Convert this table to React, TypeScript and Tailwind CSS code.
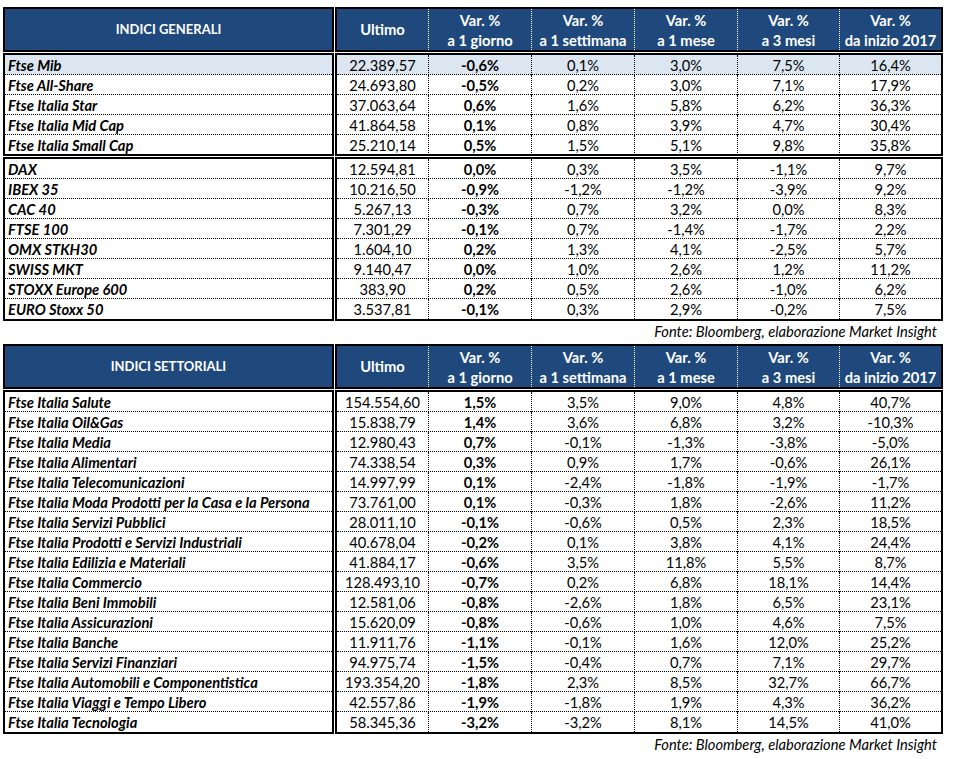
import React from "react";

type Row = [string, string, string, string, string, string, string];

const generali1: Row[] = [
  ["Ftse Mib", "22.389,57", "-0,6%", "0,1%", "3,0%", "7,5%", "16,4%"],
  ["Ftse All-Share", "24.693,80", "-0,5%", "0,2%", "3,0%", "7,1%", "17,9%"],
  ["Ftse Italia Star", "37.063,64", "0,6%", "1,6%", "5,8%", "6,2%", "36,3%"],
  ["Ftse Italia Mid Cap", "41.864,58", "0,1%", "0,8%", "3,9%", "4,7%", "30,4%"],
  ["Ftse Italia Small Cap", "25.210,14", "0,5%", "1,5%", "5,1%", "9,8%", "35,8%"],
];

const generali2: Row[] = [
  ["DAX", "12.594,81", "0,0%", "0,3%", "3,5%", "-1,1%", "9,7%"],
  ["IBEX 35", "10.216,50", "-0,9%", "-1,2%", "-1,2%", "-3,9%", "9,2%"],
  ["CAC 40", "5.267,13", "-0,3%", "0,7%", "3,2%", "0,0%", "8,3%"],
  ["FTSE 100", "7.301,29", "-0,1%", "0,7%", "-1,4%", "-1,7%", "2,2%"],
  ["OMX STKH30", "1.604,10", "0,2%", "1,3%", "4,1%", "-2,5%", "5,7%"],
  ["SWISS MKT", "9.140,47", "0,0%", "1,0%", "2,6%", "1,2%", "11,2%"],
  ["STOXX Europe 600", "383,90", "0,2%", "0,5%", "2,6%", "-1,0%", "6,2%"],
  ["EURO Stoxx 50", "3.537,81", "-0,1%", "0,3%", "2,9%", "-0,2%", "7,5%"],
];

const settoriali: Row[] = [
  ["Ftse Italia Salute", "154.554,60", "1,5%", "3,5%", "9,0%", "4,8%", "40,7%"],
  ["Ftse Italia Oil&Gas", "15.838,79", "1,4%", "3,6%", "6,8%", "3,2%", "-10,3%"],
  ["Ftse Italia Media", "12.980,43", "0,7%", "-0,1%", "-1,3%", "-3,8%", "-5,0%"],
  ["Ftse Italia Alimentari", "74.338,54", "0,3%", "0,9%", "1,7%", "-0,6%", "26,1%"],
  ["Ftse Italia Telecomunicazioni", "14.997,99", "0,1%", "-2,4%", "-1,8%", "-1,9%", "-1,7%"],
  ["Ftse Italia Moda Prodotti per la Casa e la Persona", "73.761,00", "0,1%", "-0,3%", "1,8%", "-2,6%", "11,2%"],
  ["Ftse Italia Servizi Pubblici", "28.011,10", "-0,1%", "-0,6%", "0,5%", "2,3%", "18,5%"],
  ["Ftse Italia Prodotti e Servizi Industriali", "40.678,04", "-0,2%", "0,1%", "3,8%", "4,1%", "24,4%"],
  ["Ftse Italia Edilizia e Materiali", "41.884,17", "-0,6%", "3,5%", "11,8%", "5,5%", "8,7%"],
  ["Ftse Italia Commercio", "128.493,10", "-0,7%", "0,2%", "6,8%", "18,1%", "14,4%"],
  ["Ftse Italia Beni Immobili", "12.581,06", "-0,8%", "-2,6%", "1,8%", "6,5%", "23,1%"],
  ["Ftse Italia Assicurazioni", "15.620,09", "-0,8%", "-0,6%", "1,0%", "4,6%", "7,5%"],
  ["Ftse Italia Banche", "11.911,76", "-1,1%", "-0,1%", "1,6%", "12,0%", "25,2%"],
  ["Ftse Italia Servizi Finanziari", "94.975,74", "-1,5%", "-0,4%", "0,7%", "7,1%", "29,7%"],
  ["Ftse Italia Automobili e Componentistica", "193.354,20", "-1,8%", "2,3%", "8,5%", "32,7%", "66,7%"],
  ["Ftse Italia Viaggi e Tempo Libero", "42.557,86", "-1,9%", "-1,8%", "1,9%", "4,3%", "36,2%"],
  ["Ftse Italia Tecnologia", "58.345,36", "-3,2%", "-3,2%", "8,1%", "14,5%", "41,0%"],
];

const subs = ["a 1 giorno", "a 1 settimana", "a 1 mese", "a 3 mesi", "da inizio 2017"];

const GRID = "grid grid-cols-[92px_103px_103px_103px_102px_101px]";

function Header({ title }: { title: string }) {
  return (
    <div className="flex gap-px">
      <div className="w-[331px] h-[45px] border-2 border-black bg-[#1f497d] flex items-center justify-center text-white font-bold text-[13px]">
        {title}
      </div>
      <div className={`w-[608px] h-[45px] border-2 border-black bg-[#1f497d] text-white font-bold ${GRID}`}>
        <div className="flex items-center justify-center border-r border-dotted border-white">Ultimo</div>
        {subs.map((s, i) => (
          <div
            key={s}
            className={`flex flex-col items-center justify-center leading-[20px] ${
              i < subs.length - 1 ? "border-r border-dotted border-white" : ""
            }`}
          >
            <span>Var. %</span>
            <span>{s}</span>
          </div>
        ))}
      </div>
    </div>
  );
}

function Group({
  rows,
  lastShort,
  highlightFirst,
}: {
  rows: Row[];
  lastShort?: boolean;
  highlightFirst?: boolean;
}) {
  const rowCls = (i: number) => {
    const last = i === rows.length - 1;
    const h = last ? (lastShort ? "h-[19px]" : "h-[20px]") : "h-[20px] border-b border-dotted border-black";
    const bg = highlightFirst && i === 0 ? "bg-[#dce6f1]" : "";
    return `${h} ${bg}`;
  };
  return (
    <div className="mt-px flex gap-px">
      <div className="w-[331px] border-2 border-black flex flex-col">
        {rows.map((r, i) => (
          <div key={r[0]} className={`${rowCls(i)} pl-[3px] leading-[20px] font-bold italic whitespace-nowrap`}>
            {r[0]}
          </div>
        ))}
      </div>
      <div className="w-[608px] border-2 border-black flex flex-col">
        {rows.map((r, i) => (
          <div key={r[0]} className={`${rowCls(i)} ${GRID}`}>
            {r.slice(1).map((v, j) => (
              <div
                key={j}
                className={`text-center leading-[20px] ${j === 1 ? "font-bold" : ""} ${
                  j < 5 ? "border-r border-dotted border-black" : ""
                }`}
              >
                {v}
              </div>
            ))}
          </div>
        ))}
      </div>
    </div>
  );
}

function Footer() {
  return (
    <div className="w-[940px] h-[20px] flex items-center justify-end pr-[6px] italic leading-[20px]">
      Fonte: Bloomberg, elaborazione Market Insight
    </div>
  );
}

export default function App() {
  return (
    <div className="w-[963px] h-[759px] bg-white pl-[3px] pt-[7px] text-[14.7px] text-black font-['Lato',sans-serif] overflow-hidden">
      <div className="flex flex-col">
        <Header title="INDICI GENERALI" />
        <Group rows={generali1} lastShort highlightFirst />
        <Group rows={generali2} />
        <Footer />
      </div>
      <div className="mt-[3px] flex flex-col">
        <Header title="INDICI SETTORIALI" />
        <Group rows={settoriali} />
        <Footer />
      </div>
    </div>
  );
}
